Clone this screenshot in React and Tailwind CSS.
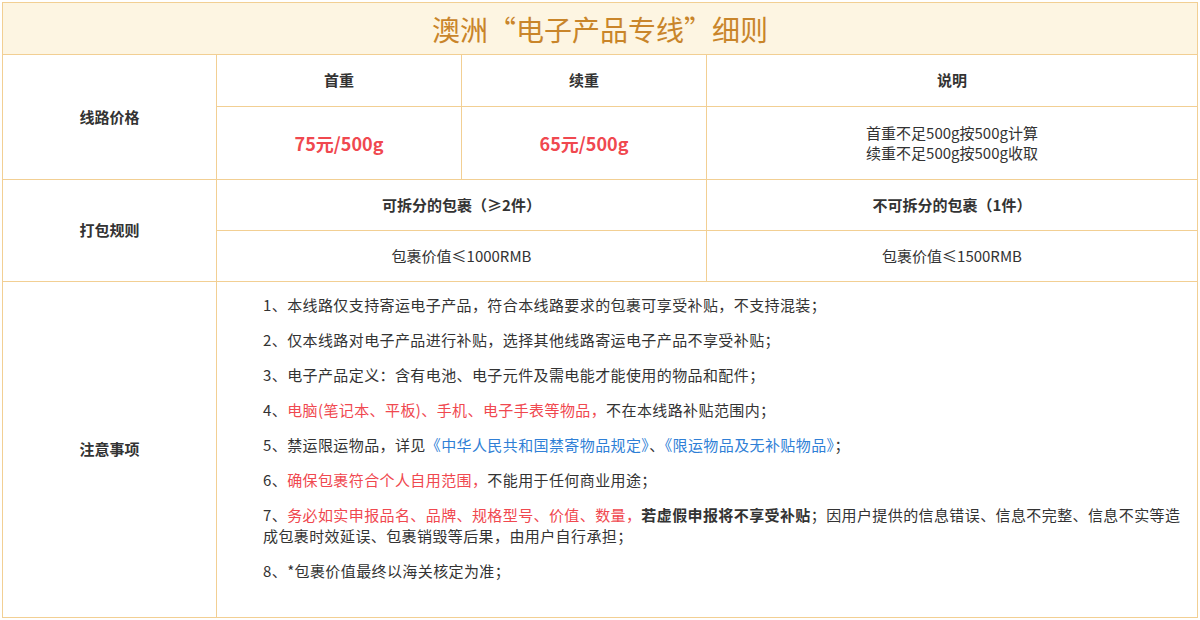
import React from 'react';

const font = { fontFamily: '"Noto Sans CJK SC", "Noto Sans", sans-serif' };
const bd = 'border border-[#f2cf93]';

export default function App() {
  return (
    <div className="w-[1200px] h-[620px] bg-white p-[2px] text-[#333]" style={font}>
      <table className="w-[1196px] border-collapse table-fixed">
        <colgroup>
          <col className="w-[214px]" />
          <col className="w-[245px]" />
          <col className="w-[245px]" />
          <col />
        </colgroup>
        <tbody>
          <tr className="h-[52px]">
            <td colSpan={4} className={`${bd} bg-[#fdf5e2] text-center text-[28px] text-[#c9852a]`}>
              澳洲“电子产品专线”细则
            </td>
          </tr>
          <tr className="h-[52px] text-[15px] font-bold text-center">
            <td rowSpan={2} className={bd}>线路价格</td>
            <td className={bd}>首重</td>
            <td className={bd}>续重</td>
            <td className={bd}>说明</td>
          </tr>
          <tr className="h-[73px] text-center">
            <td className={`${bd} text-[18px] font-bold text-[#f0484f]`}>75元/500g</td>
            <td className={`${bd} text-[18px] font-bold text-[#f0484f]`}>65元/500g</td>
            <td className={`${bd} text-[15px] leading-[20px]`}>
              首重不足500g按500g计算<br />续重不足500g按500g收取
            </td>
          </tr>
          <tr className="h-[51px] text-[15px] font-bold text-center">
            <td rowSpan={2} className={bd}>打包规则</td>
            <td colSpan={2} className={bd}>可拆分的包裹（≥2件）</td>
            <td className={bd}>不可拆分的包裹（1件）</td>
          </tr>
          <tr className="h-[51px] text-[15px] text-center">
            <td colSpan={2} className={bd}>包裹价值≤1000RMB</td>
            <td className={bd}>包裹价值≤1500RMB</td>
          </tr>
          <tr className="h-[336px] text-[15px] tracking-[0.4px]">
            <td className={`${bd} text-center font-bold tracking-normal`}>注意事项</td>
            <td colSpan={3} className={`${bd} pl-[46px] pr-[12px] align-top pt-[12px]`}>
              <div className="flex flex-col gap-[14px] leading-[21px]">
                <p>1、本线路仅支持寄运电子产品，符合本线路要求的包裹可享受补贴，不支持混装；</p>
                <p>2、仅本线路对电子产品进行补贴，选择其他线路寄运电子产品不享受补贴；</p>
                <p>3、电子产品定义：含有电池、电子元件及需电能才能使用的物品和配件；</p>
                <p>4、<span className="text-[#f0484f]">电脑(笔记本、平板)、手机、电子手表等物品，</span>不在本线路补贴范围内；</p>
                <p>5、禁运限运物品，详见<span className="text-[#2f7fd6]">《中华人民共和国禁寄物品规定》</span>、<span className="text-[#2f7fd6]">《限运物品及无补贴物品》</span>；</p>
                <p>6、<span className="text-[#f0484f]">确保包裹符合个人自用范围，</span>不能用于任何商业用途；</p>
                <p>7、<span className="text-[#f0484f]">务必如实申报品名、品牌、规格型号、价值、数量，</span><span className="font-bold">若虚假申报将不享受补贴</span>；因用户提供的信息错误、信息不完整、信息不实等造成包裹时效延误、包裹销毁等后果，由用户自行承担；</p>
                <p>8、*包裹价值最终以海关核定为准；</p>
              </div>
            </td>
          </tr>
        </tbody>
      </table>
    </div>
  );
}
